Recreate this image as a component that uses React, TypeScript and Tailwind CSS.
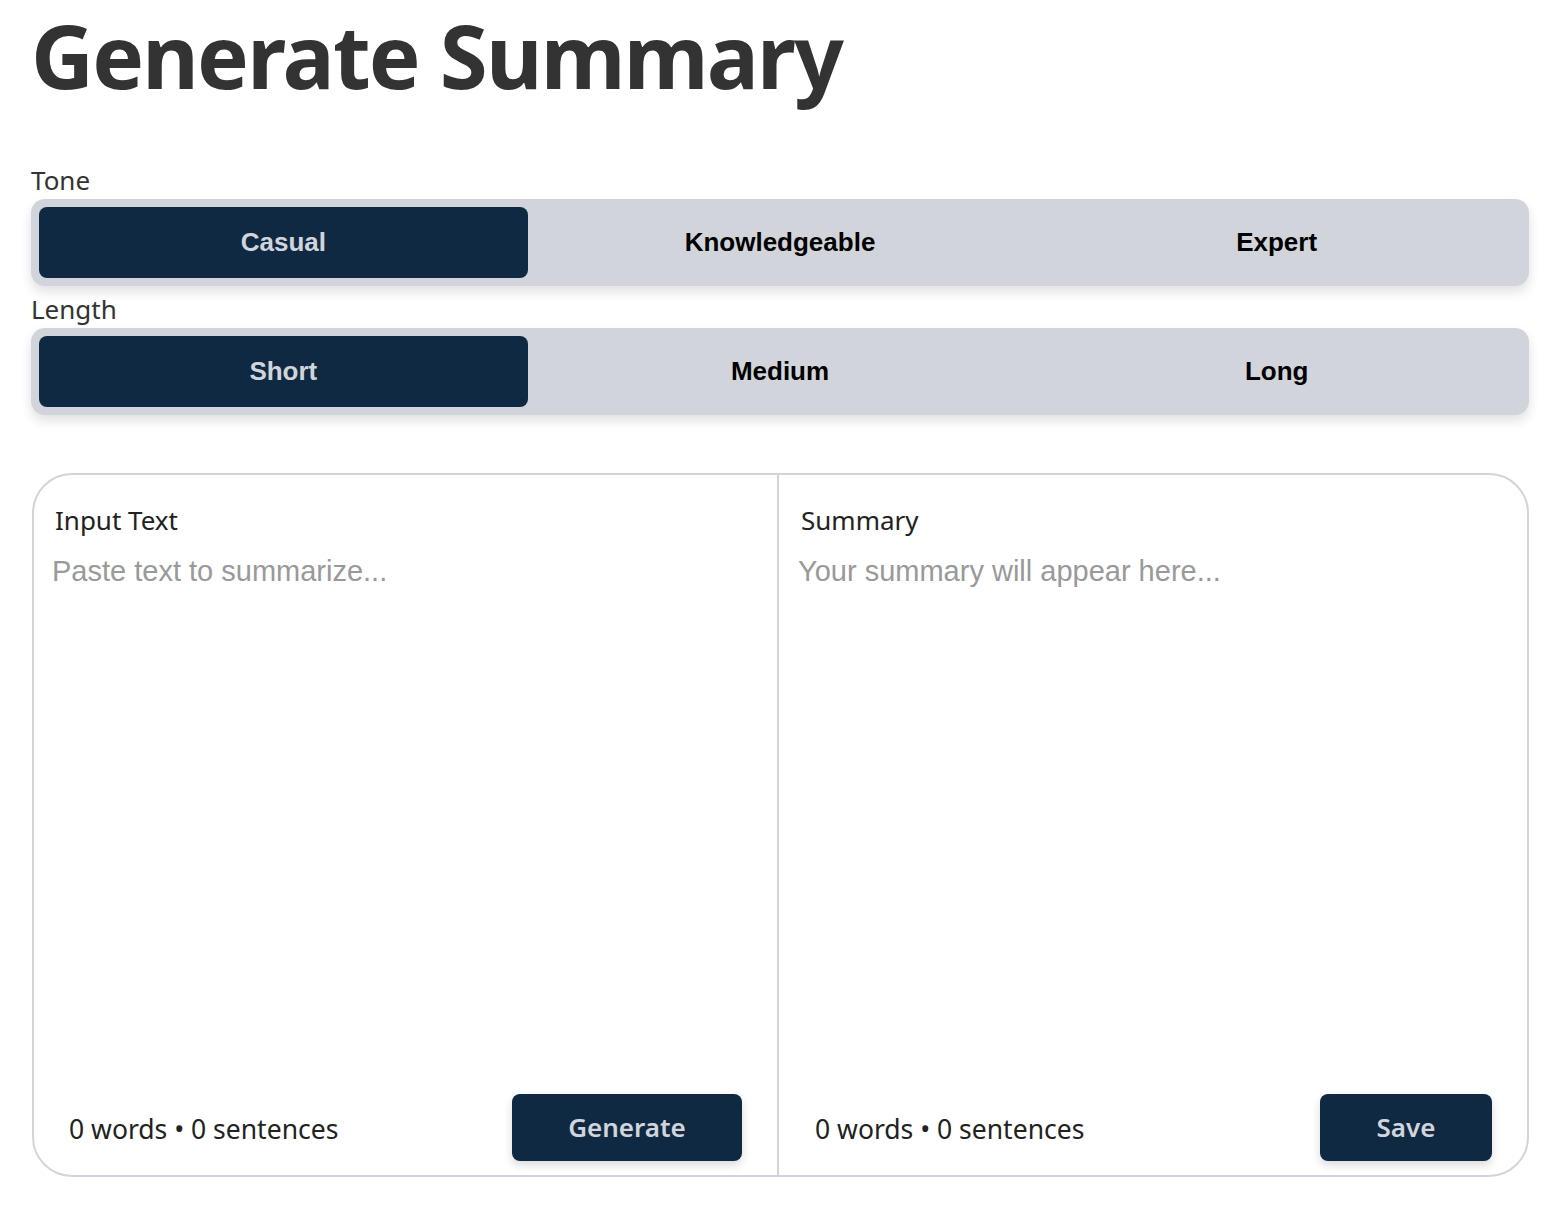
import React, { useState } from "react";

const segoe = { fontFamily: '"Noto Sans", "Open Sans", sans-serif' };

function Segmented({ options, value, onChange }: { options: string[]; value: string; onChange: (v: string) => void }) {
  return (
    <div className="grid grid-cols-3 gap-2 p-2 rounded-[14px] bg-[#d1d5db] shadow-[0_6px_12px_rgba(0,0,0,0.12)]">
      {options.map((o) => (
        <button
          key={o}
          onClick={() => onChange(o)}
          className={
            "h-[71px] rounded-lg text-[26px] font-bold font-['Liberation_Sans',Arial,sans-serif] " +
            (value === o ? "bg-[#0f2942] text-[#d1d5db]" : "bg-transparent text-black")
          }
        >
          {o}
        </button>
      ))}
    </div>
  );
}

export default function App() {
  const [tone, setTone] = useState("Casual");
  const [len, setLen] = useState("Short");
  const [text, setText] = useState("");
  return (
    <div className="bg-white min-h-[1207px] pl-[31px] pr-[35px] pt-0 text-[#333]" style={segoe}>
      <h1 className="text-[87px] leading-[120px] -mt-[5px] font-bold text-[#333] tracking-[-1.8px]">Generate Summary</h1>
      <div className="mt-[49px] text-[26px] leading-[32px] text-[#333]">Tone</div>
      <div className="mt-[3px]">
        <Segmented options={["Casual", "Knowledgeable", "Expert"]} value={tone} onChange={setTone} />
      </div>
      <div className="mt-[7px] text-[26px] leading-[32px] text-[#333]">Length</div>
      <div className="mt-[3px]">
        <Segmented options={["Short", "Medium", "Long"]} value={len} onChange={setLen} />
      </div>
      <div className="ml-[1px] mt-[58px] grid grid-cols-[745px_1fr] h-[704px] border-2 border-[#d1d5db] rounded-[40px] overflow-hidden">
        <div className="flex flex-col border-r-2 border-[#d1d5db]">
          <div className="pl-[21px] pt-[28px] text-[26px] leading-[34px] text-[#222]">Input Text</div>
          <textarea
            value={text}
            onChange={(e) => setText(e.target.value)}
            placeholder="Paste text to summarize..."
            className="flex-1 mx-[18px] mt-[16px] resize-none outline-none text-[29px] leading-[36px] placeholder:text-[#999] font-['Liberation_Sans',Arial,sans-serif]"
          />
          <div className="flex items-center justify-between pl-[35px] pr-[35px] pb-[14px] pt-[8px]">
            <span className="mt-[5px] text-[26.5px] text-[#222]">0 words • 0 sentences</span>
            <button className="w-[230px] h-[67px] rounded-lg bg-[#0f2942] text-[#d1d5db] text-[26px] font-semibold shadow-[0_4px_10px_rgba(0,0,0,0.15)]">
              Generate
            </button>
          </div>
        </div>
        <div className="flex flex-col">
          <div className="pl-[22px] pt-[28px] text-[26px] leading-[34px] text-[#222]">Summary</div>
          <div className="flex-1 ml-[19px] mr-[18px] mt-[16px] text-[29px] leading-[36px] text-[#999] font-['Liberation_Sans',Arial,sans-serif]">
            Your summary will appear here...
          </div>
          <div className="flex items-center justify-between pl-[36px] pr-[35px] pb-[14px] pt-[8px]">
            <span className="mt-[5px] text-[26.5px] text-[#222]">0 words • 0 sentences</span>
            <button className="w-[172px] h-[67px] rounded-lg bg-[#0f2942] text-[#d1d5db] text-[26px] font-semibold shadow-[0_4px_10px_rgba(0,0,0,0.15)]">
              Save
            </button>
          </div>
        </div>
      </div>
    </div>
  );
}
